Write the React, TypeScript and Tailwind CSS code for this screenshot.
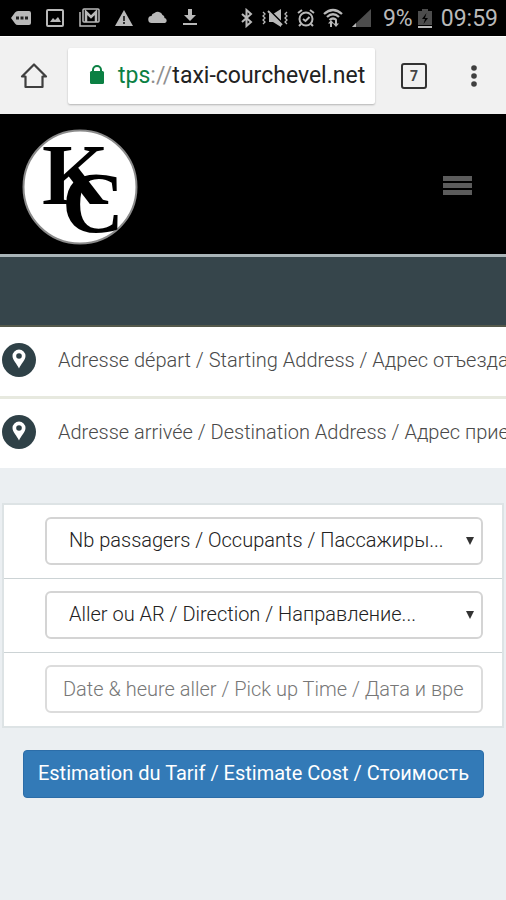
import React from "react";

function StatusIcon({ w, children }: { w: number; children: React.ReactNode }) {
  return (
    <svg width={w} height="20" viewBox={`0 0 ${w} 20`} className="shrink-0" aria-hidden="true">
      {children}
    </svg>
  );
}

function StatusBar() {
  return (
    <div className="flex h-9 items-center justify-between bg-black pr-2 pl-[11px] text-[#b9b9b9]">
      <div className="flex items-center gap-[15px]">
        <StatusIcon w={20}>
          <path d="M7 3h11q2 0 2 2v10q0 2-2 2H7q-2 0-3-1.500L0 10l4-5.500Q5 3 7 3z" fill="currentColor" />
          <path d="M5 8.500h3v3H5zM9.500 8.500h3v3h-3zM14 8.500h3v3h-3z" fill="#222" />
        </StatusIcon>
        <StatusIcon w={18}>
          <rect x="1" y="2" width="16" height="16" rx="1" fill="none" stroke="currentColor" strokeWidth="2" />
          <path d="M4 14l3-4 2 2 3-3 3 5z" fill="currentColor" />
        </StatusIcon>
        <StatusIcon w={21}>
          <path d="M1 4v14h16" fill="none" stroke="currentColor" strokeWidth="1.500" />
          <rect x="4" y="1" width="16" height="13" rx="1" fill="none" stroke="currentColor" strokeWidth="1.500" />
          <path d="M7 14V4l5 5 5-5v10" fill="none" stroke="currentColor" strokeWidth="2.500" />
        </StatusIcon>
        <StatusIcon w={18}>
          <path d="M9 2l9 16H0z" fill="currentColor" />
          <path d="M8 8h2v5H8zM8 14h2v2H8z" fill="#333" />
        </StatusIcon>
        <StatusIcon w={20}>
          <path d="M4 15a3.500 3.500 0 0 1-.5-7 3.500 3.500 0 0 1 3-3 5 5 0 0 1 8 2 3 3 0 0 1 2 3 2.600 2.600 0 0 1 .5 5z" fill="currentColor" />
        </StatusIcon>
        <StatusIcon w={18}>
          <path d="M5 1h4v6h4l-6 6-6-6h4zM0 15h14v2H0z" fill="currentColor" />
        </StatusIcon>
      </div>
      <div className="flex items-center gap-2">
        <StatusIcon w={13}>
          <path d="M2 6l9 8-4.500 4V2L11 6l-9 8" fill="none" stroke="currentColor" strokeWidth="2" />
        </StatusIcon>
        <StatusIcon w={28}>
          <path d="M2 4l2 2-2 2 2 2-2 2 2 2-2 2M26 4l-2 2 2 2-2 2 2 2-2 2 2 2" fill="none" stroke="currentColor" strokeWidth="1.300" />
          <path d="M8 6h4l8-5v18l-8-5H8z" fill="currentColor" />
          <path d="M8 2l14 14" stroke="#000" strokeWidth="2" />
          <path d="M7 3l14 14" stroke="currentColor" strokeWidth="2" />
        </StatusIcon>
        <StatusIcon w={18}>
          <circle cx="9" cy="11" r="6.500" fill="none" stroke="currentColor" strokeWidth="2" />
          <path d="M1 5l4-3M17 5l-4-3M6 11l2.500 2 4-4M4 16l-2 2M14 16l2 2" fill="none" stroke="currentColor" strokeWidth="2" />
        </StatusIcon>
        <StatusIcon w={20}>
          <path d="M1 6q9-8 18 0M4 9q6-5.500 12 0M6.500 12q3.500-3 7 0" fill="none" stroke="currentColor" strokeWidth="2.300" />
          <path d="M8 12l3 3.500H9V19H7v-3.500H5zM13 19l-3-3.500h2V12h2v3.500h2z" fill="currentColor" />
        </StatusIcon>
        <StatusIcon w={20}>
          <path d="M20 1v18H1z" fill="#4d4d4d" />
          <path d="M5 15v4H1z" fill="currentColor" />
        </StatusIcon>
        <div className="flex items-center gap-1 pt-[2px] pl-1 font-[Roboto,sans-serif] text-[23px] leading-7">
          <span>9%</span>
          <StatusIcon w={16}>
            <path d="M5 0h6v2h4v14H1V2h4z" fill="#4d4d4d" />
            <path d="M1 17h14v2H1z" fill="currentColor" />
            <path d="M9.500 4L5 10h3l-1.500 5L11 9H8z" fill="#000" />
          </StatusIcon>
          <span className="pl-1">09:59</span>
        </div>
      </div>
    </div>
  );
}

function BrowserBar() {
  return (
    <div className="flex h-[78px] items-center border-t border-white bg-[#f1f1f1] px-5">
      <button aria-label="Home" className="shrink-0">
        <svg width="28" height="28" viewBox="0 0 28 28" fill="none" stroke="#3f3f3f" strokeWidth="2.200" strokeLinejoin="round">
          <path d="M2 14.500L14 2.500l12 12h-3.500v10.500h-17V14.500z" />
        </svg>
      </button>
      <button className="ml-5 flex h-14 min-w-0 flex-1 items-center gap-3 overflow-hidden rounded-xs bg-white pl-5 text-left font-[Roboto,sans-serif] text-[23px] leading-8 whitespace-nowrap text-[#222] shadow-[0_1px_2px_rgba(0,0,0,0.25)]">
        <svg width="18" height="22" viewBox="0 0 18 22" className="shrink-0" aria-hidden="true">
          <rect x="2" y="6" width="14" height="13" rx="1.500" fill="#0b8043" />
          <path d="M5 7V5a4 4 0 0 1 8 0V7" fill="none" stroke="#0b8043" strokeWidth="2" />
        </svg>
        <span>
          <span className="text-[#0b8043]">tps</span>
          <span className="text-[#8f8f8f]">://</span>taxi-courchevel.net
        </span>
      </button>
      <button aria-label="Tabs" className="ml-[26px] flex h-[26px] w-[26px] shrink-0 items-center justify-center rounded-[3px] border-[2px] border-[#333] font-[Roboto,sans-serif] text-sm font-bold text-[#444]">
        7
      </button>
      <button aria-label="Menu" className="ml-[35px] shrink-0">
        <svg width="24" height="24" viewBox="0 0 24 24" fill="#3f3f3f">
          <circle cx="12" cy="4" r="2.800" />
          <circle cx="12" cy="12" r="2.800" />
          <circle cx="12" cy="20" r="2.800" />
        </svg>
      </button>
    </div>
  );
}

function SiteHeader() {
  return (
    <header className="flex h-[143px] items-center justify-between border-b-[3px] border-[#a9b4b8] bg-black pt-[3px] pr-[34px] pl-[21px]">
      <a href="#" aria-label="KC">
        <svg width="118" height="118" viewBox="0 0 118 118" className="overflow-visible">
          <circle cx="59" cy="60" r="56.500" fill="#fff" stroke="#8a8a8a" strokeWidth="2" />
          <g fontFamily="Liberation Serif, serif" fontWeight="bold" fill="#000">
            <text x="21" y="77" fontSize="86">K</text>
            <text x="41" y="105" fontSize="86">C</text>
          </g>
        </svg>
      </a>
      <button aria-label="Menu" className="flex w-[29px] flex-col gap-[2px]">
        <span className="h-[5px] bg-[#5c5c5c]" />
        <span className="h-[5px] bg-[#5c5c5c]" />
        <span className="h-[5px] bg-[#5c5c5c]" />
      </button>
    </header>
  );
}

function AddressRow({ id, placeholder }: { id: string; placeholder: string }) {
  return (
    <div className="flex h-[69px] items-center bg-white pb-[3px] pl-[2px]">
      <label htmlFor={id} aria-label={placeholder} className="shrink-0">
        <svg width="34" height="34" viewBox="0 0 34 34">
          <circle cx="17" cy="17" r="17" fill="#2f4147" />
          <path d="M17 6.500a6.500 6.500 0 0 1 6.500 6.500c0 4-4.500 8-6.500 12.500-2-4.500-6.500-8.500-6.500-12.500A6.500 6.500 0 0 1 17 6.500z" fill="#fff" />
          <circle cx="17" cy="13" r="2.800" fill="#2f4147" />
        </svg>
      </label>
      <input
        id={id}
        type="text"
        placeholder={placeholder}
        className="ml-[22px] h-12 min-w-0 flex-1 bg-transparent text-[20px] font-light text-[#444] outline-none placeholder:text-[#4a4a4a]"
      />
    </div>
  );
}

function SelectField({ label }: { label: string }) {
  return (
    <div className="relative">
      <select
        aria-label={label}
        className="h-12 w-full appearance-none rounded-md border-2 border-[#d4d4d4] bg-white px-[22px] pb-[2px] text-[20px] font-light text-[#222]"
      >
        <option>{label}</option>
      </select>
      <svg width="10" height="10" viewBox="0 0 10 10" className="pointer-events-none absolute top-[19px] right-2" aria-hidden="true">
        <path d="M1 1h8L5 9z" fill="#333" />
      </svg>
    </div>
  );
}

export default function App() {
  return (
    <div className="min-h-screen bg-[#ebeff2] font-[Roboto,sans-serif]">
      <StatusBar />
      <BrowserBar />
      <SiteHeader />
      <div className="h-[70px] border-b-2 border-[#55594b] bg-[#36454b]" />
      <form onSubmit={(e) => e.preventDefault()}>
        <div className="flex flex-col gap-[3px] bg-[#e7e9df]">
          <AddressRow id="depart" placeholder="Adresse départ / Starting Address / Адрес отъезда" />
          <AddressRow id="arrivee" placeholder="Adresse arrivée / Destination Address / Адрес приезда" />
        </div>
        <div className="mx-[2px] mt-[35px] divide-y divide-[#ccd3d5] border-2 border-[#dde3e5] bg-white">
          <div className="pt-3 pr-[19px] pb-[13px] pl-[41px]">
            <SelectField label="Nb passagers / Occupants / Пассажиры..." />
          </div>
          <div className="pt-3 pr-[19px] pb-[13px] pl-[41px]">
            <SelectField label="Aller ou AR / Direction / Направление..." />
          </div>
          <div className="pt-3 pr-[19px] pb-[13px] pl-[41px]">
            <input
              type="text"
              aria-label="Date & heure aller"
              placeholder="Date & heure aller / Pick up Time / Дата и вре"
              className="block h-12 w-full rounded-md border-2 border-[#dcdcdc] bg-white px-4 text-[20px] font-light text-[#555] placeholder:text-[#777]"
            />
          </div>
        </div>
        <div className="mt-[22px] pr-[22px] pl-[23px]">
          <button
            type="submit"
            className="h-12 w-full rounded-[4px] border border-[#2c6da8] bg-[#337ab7] pb-[2px] text-[20px] whitespace-nowrap text-white"
          >
            Estimation du Tarif / Estimate Cost / Стоимость
          </button>
        </div>
      </form>
    </div>
  );
}
